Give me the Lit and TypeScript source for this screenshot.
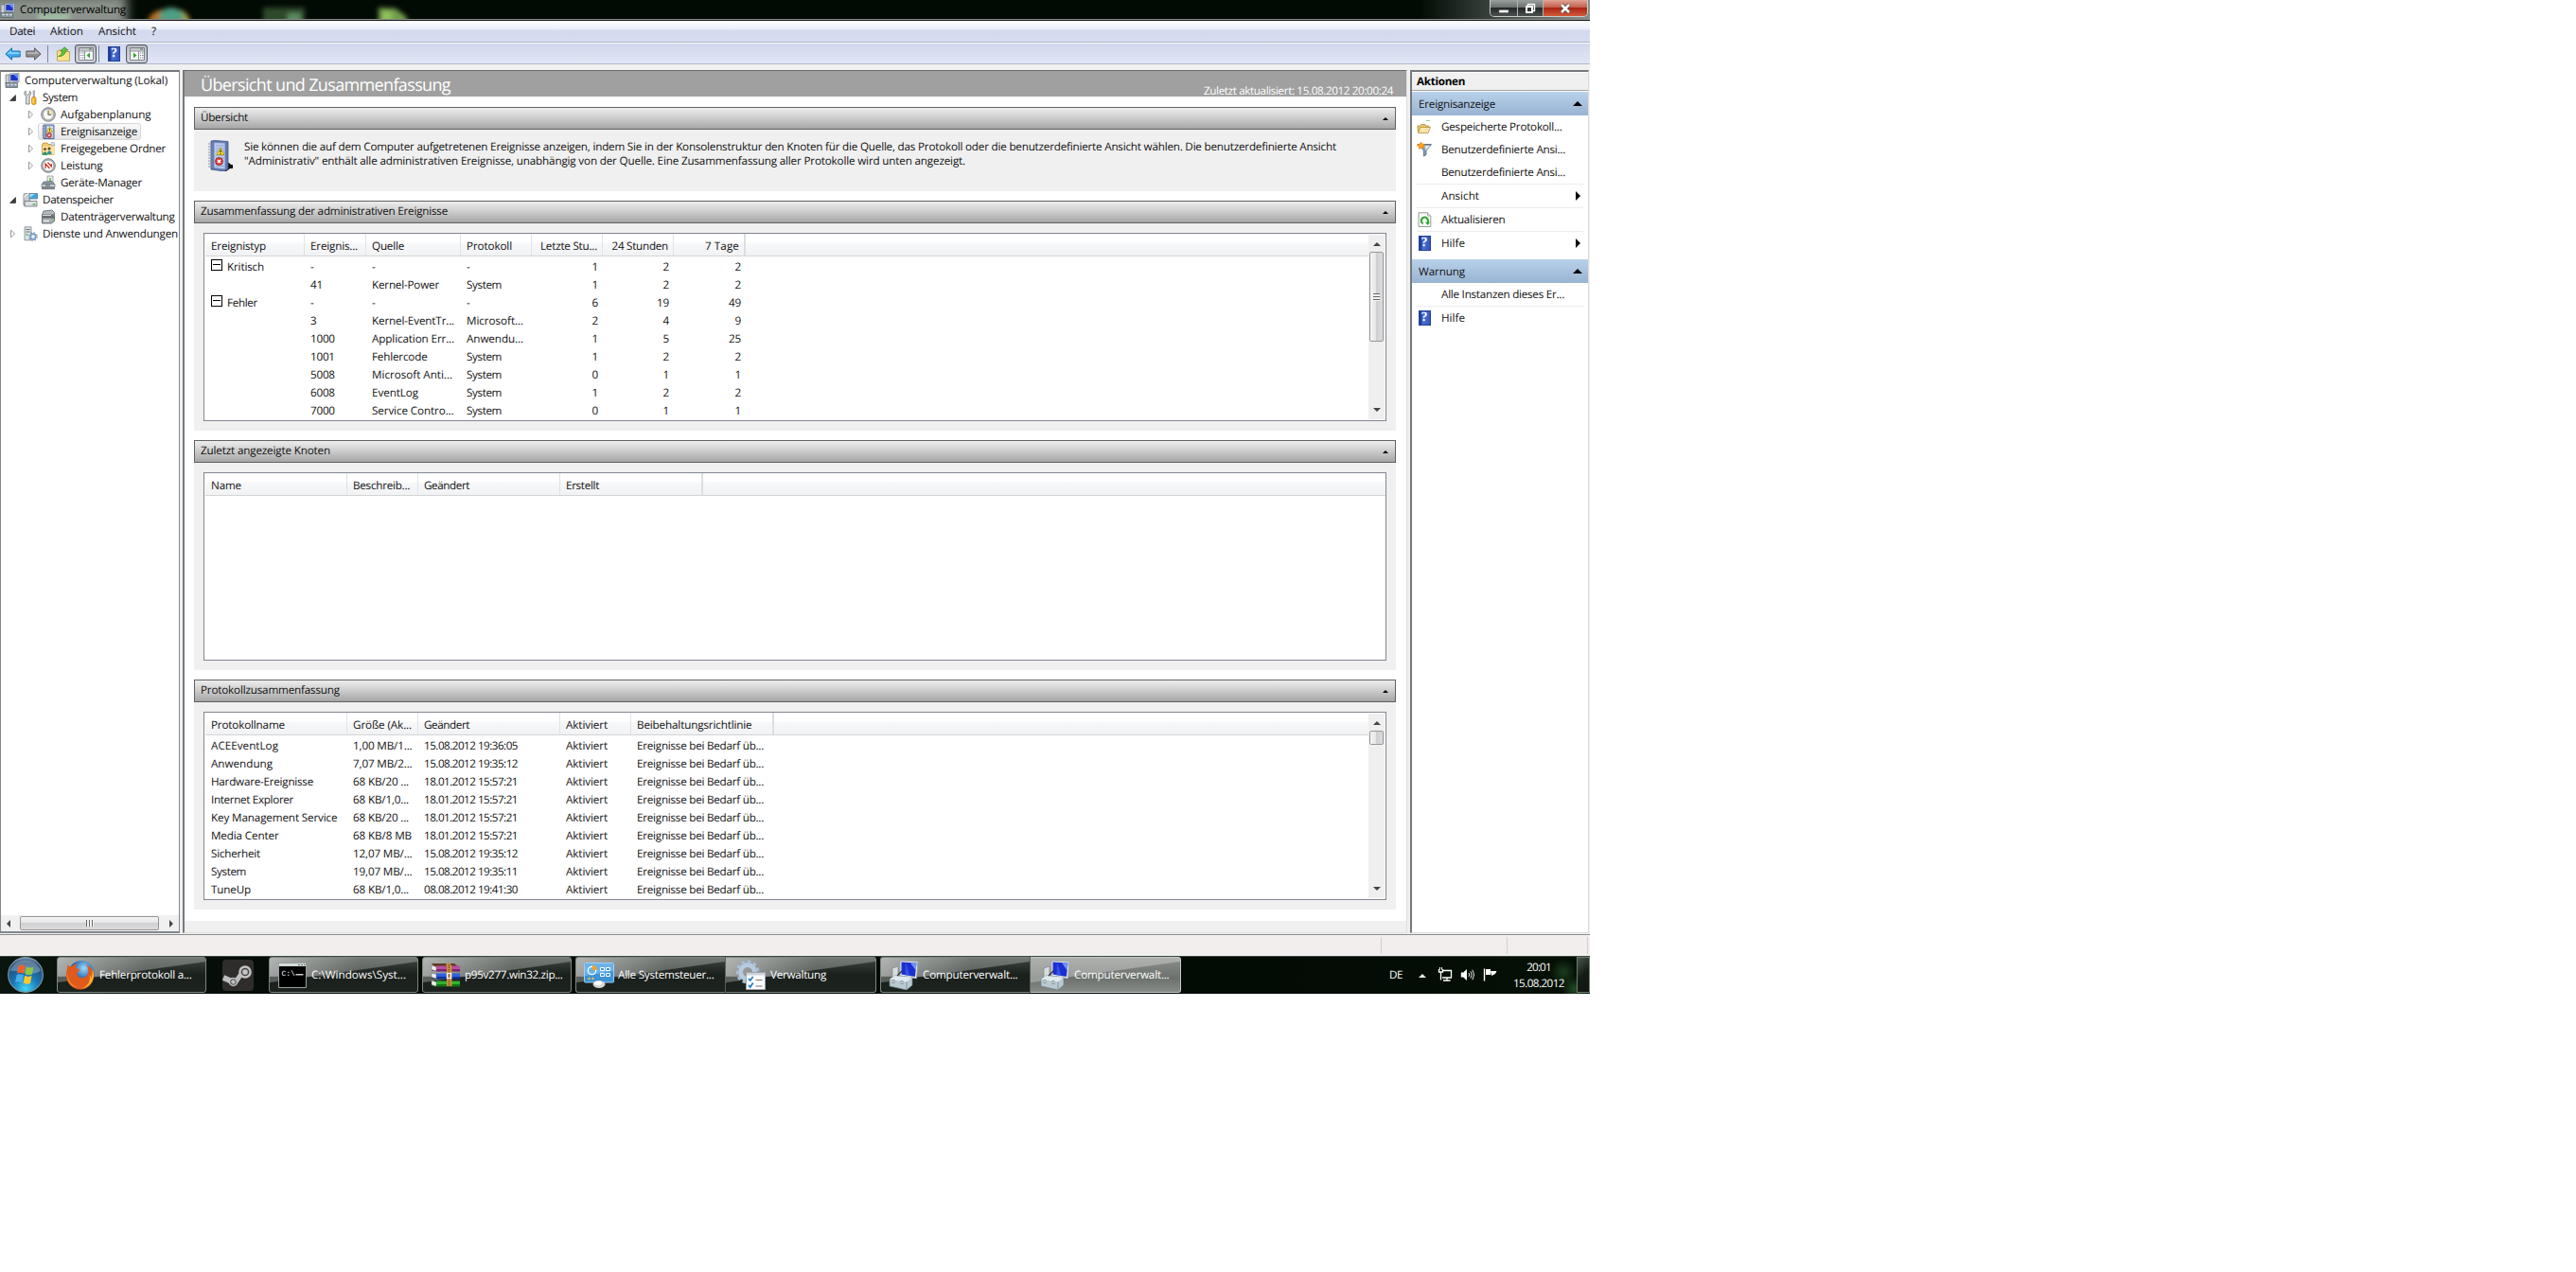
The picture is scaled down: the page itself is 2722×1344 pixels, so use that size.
import { LitElement, html, css, svg, nothing, TemplateResult } from "lit";
import { customElement, property } from "lit/decorators.js";

/* Measured advance widths of the interface strings, in pixels. */
const WIDTHS: Record<string, number> = {
  "Computerverwaltung": 112, "Datei": 27, "Aktion": 35, "Ansicht": 40,
  "Computerverwaltung (Lokal)": 151, "System": 37, "Aufgabenplanung": 95.5, "Ereignisanzeige": 81,
  "Freigegebene Ordner": 111, "Leistung": 44.5, "Geräte-Manager": 86, "Datenspeicher": 75,
  "Datenträgerverwaltung": 120.5, "Dienste und Anwendungen": 143,
  "Übersicht und Zusammenfassung": 264, "Zuletzt aktualisiert: 15.08.2012 20:00:24": 200,
  "Übersicht": 50, "Zusammenfassung der administrativen Ereignisse": 261,
  "Zuletzt angezeigte Knoten": 137, "Protokollzusammenfassung": 147,
  "Ereignistyp": 58, "Ereignis...": 50, "Quelle": 34, "Protokoll": 48, "Letzte Stu...": 60,
  "24 Stunden": 59.5, "7 Tage": 36, "Kritisch": 39, "Fehler": 32, "Kernel-Power": 71,
  "Kernel-EventTr...": 87, "Microsoft...": 60, "Application Err...": 87, "Anwendu...": 60,
  "Fehlercode": 58.5, "Microsoft Anti...": 85, "EventLog": 49, "Service Contro...": 86.5,
  "Name": 32, "Beschreib...": 60, "Geändert": 48, "Erstellt": 35,
  "Protokollname": 78, "Größe (Ak...": 62, "Aktiviert": 44, "Beibehaltungsrichtlinie": 121.5,
  "ACEEventLog": 71, "Anwendung": 65, "Hardware-Ereignisse": 108, "Internet Explorer": 87,
  "Key Management Service": 133.5, "Media Center": 71.5, "Sicherheit": 52, "TuneUp": 42,
  "1,00 MB/1...": 62.5, "7,07 MB/2...": 62.5, "68 KB/20 ...": 59, "68 KB/1,0...": 59,
  "68 KB/8 MB": 62, "12,07 MB/...": 62.5, "19,07 MB/...": 62.5, "Ereignisse bei Bedarf üb...": 134,
  "Aktionen": 51, "Gespeicherte Protokoll...": 127.5, "Benutzerdefinierte Ansi...": 131,
  "Aktualisieren": 67.5, "Hilfe": 25, "Warnung": 49, "Alle Instanzen dieses Er...": 130,
  "Fehlerprotokoll a...": 97.5, "C:\\Windows\\Syst...": 100, "p95v277.win32.zip...": 103.5,
  "Alle Systemsteuer...": 101.5, "Verwaltung": 59, "Computerverwalt...": 100.5,
  "15.08.2012": 54, "20:01": 25.5, "DE": 14,
};

const pen = document.createElement("canvas").getContext("2d")!;

/** Text with the letter spacing that gives it its known width. */
function t(text: string, size = 11.7, weight = 400, width = 0): TemplateResult {
  pen.font = `${weight} ${size}px "Open Sans"`;
  const natural = pen.measureText(text).width;
  const target =
    width || WIDTHS[text] || (/^\d\d\.\d\d\.\d{4} \d/.test(text) ? 99 : natural * 0.965);
  const gap = (target - natural) / text.length;
  return html`<span style="letter-spacing:${gap.toFixed(3)}px">${text}</span>`;
}

const pic = (w: number, h: number, body: unknown, cls = "") =>
  html`<svg class="pic ${cls}" width=${w} height=${h} viewBox="0 0 ${w} ${h}">${body}</svg>`;

const warn = svg`<path d="M9.500 3 12.500 8.300H6.500Z" fill="#ffe23a" stroke="#b08a00" stroke-width=".6"/><path d="M9.500 4.800v1.800M9.500 7.100v.6" stroke="#222" stroke-width=".9"/>
  <circle cx="9" cy="11.800" r="2.600" fill="#d8423a" stroke="#a11" stroke-width=".4"/><path d="m8 10.800 2 2m0-2-2 2" stroke="#fff" stroke-width=".9"/>`;

const icons: Record<string, TemplateResult> = {
  computer: pic(16, 16, svg`
    <path d="M1 2h4v10H1z" fill="#c9ced3" stroke="#6d7780" stroke-width=".7"/>
    <path d="m5 1 10-.6v9.400L5 9z" fill="#dfe4ea" stroke="#707a86" stroke-width=".7"/>
    <path d="m6.200 2 7.600-.4v6.800L6.200 8z" fill="#1c35c8"/><path d="M9.500 1.800 13.800 1.600V6z" fill="#6d92f2"/>
    <path d="M1 10.500h12.500v5H1z" fill="#8b979f" stroke="#56616a" stroke-width=".7"/>
    <path d="M2.500 12.500h2m2 0h2m2 0h2" stroke="#e8eef2" stroke-width="1.400"/>`),
  system: pic(16, 16, svg`
    <path d="M3.200 1v3.200l2 1.200 2-1.200V1c2 1.200 2 4.300 0 5.500V15H3.400V6.600C1.300 5.400 1.300 2.200 3.200 1Z" fill="#d5d8da" stroke="#767c80" stroke-width=".8"/>
    <path d="M11 .8h1.600v7H11z" fill="#b9bec2" stroke="#888" stroke-width=".5"/>
    <rect x="9.600" y="7.500" width="4.400" height="8" rx="1.800" fill="#f5b31e" stroke="#b9790a" stroke-width=".7"/><path d="M11 9v5" stroke="#ffe48f"/>`),
  clock: pic(16, 16, svg`
    <circle cx="8" cy="8" r="7.300" fill="#b8bcc0" stroke="#74797d" stroke-width=".9"/>
    <circle cx="8" cy="8" r="5.500" fill="#fbfaf0" stroke="#8f9498" stroke-width=".6"/>
    <path d="M8 3a5 5 0 0 1 5 5H8z" fill="#f6e3a8"/><path d="M8 3.800V8.300h3.400" fill="none" stroke="#4f5d70" stroke-width="1.100"/>`),
  events: pic(16, 16, svg`
    <path d="M3 1h11v14.500H3z" fill="#b9c9e6" stroke="#44598c" stroke-width=".9"/>
    <path d="M4.800 1.500h1.200V15H4.800z" fill="#5c74ae"/><path d="M7 3.500h6M7 6h6M7 9h6M7 12h6" stroke="#e9effa" stroke-width=".9"/>
    <path d="M1.500 2.500h3m-3 2h3m-3 2h3m-3 2h3m-3 2h3m-3 2h3m-3 2h3" stroke="#7b8594" stroke-width=".8"/>${warn}`),
  folder: pic(16, 16, svg`
    <path d="M1.500 3.500 3 2h4l1 1.500h6v11h-12.500z" fill="#eec873" stroke="#b98d33" stroke-width=".8"/>
    <path d="M2 5.500h12.500V14.500H2z" fill="#fbe3a0"/><path d="M11 1.500h3.500v3H11z" fill="#cfe0f5" stroke="#86a0c0" stroke-width=".5"/>
    <circle cx="4.500" cy="8.500" r="1.600" fill="#7b5634"/><path d="M2 15c0-5 5-5 5 0z" fill="#31976c"/>
    <circle cx="9" cy="8" r="1.600" fill="#5d4630"/><path d="M6.800 14c0-5 4.800-5 4.800 0z" fill="#3b8f98"/>`),
  perf: pic(16, 16, svg`
    <circle cx="8" cy="8" r="7.300" fill="#b3b8bb" stroke="#6f7579" stroke-width=".9"/>
    <circle cx="8" cy="8" r="5.700" fill="#fff" stroke="#8b8f92" stroke-width=".6"/>
    <path d="M5 11V6l4.500 5M7.500 4.600l3.800 4.400V6" fill="none" stroke="#c8261c" stroke-width="1.200"/>`),
  device: pic(16, 16, svg`
    <path d="M7 1h6v8H7z" fill="#eef2ef" stroke="#7f8a85" stroke-width=".7"/><path d="M9 3h2v4H9z" fill="#7cc06a"/>
    <path d="m3 7 9-.5 2.500 3H1.500z" fill="#8d9ba1" stroke="#5a666b" stroke-width=".7"/>
    <path d="M1 9.500h14v3H1z" fill="#c6ced2" stroke="#626e73" stroke-width=".7"/><path d="M1 12.500h14v2.700H1z" fill="#7a858a"/><path d="M5 11h5" stroke="#4a5458"/>`),
  storage: pic(16, 16, svg`
    <rect x="1" y="1.500" width="6.500" height="13" rx="1.500" fill="#c8cdd0" stroke="#787f84" stroke-width=".8"/>
    <path d="M2 6a4 4 0 0 1 5-4" stroke="#fff" fill="none"/>
    <path d="M7 1.500h8.500v5.500H7z" fill="#3aa7e0" stroke="#5d7688" stroke-width=".8"/><path d="M7.500 2h5l-5 4z" fill="#a9def8"/>
    <path d="M2 9.500h13v5.500H2z" fill="#dce0e2" stroke="#687075" stroke-width=".8"/><path d="M10.500 13h3" stroke="#40b040" stroke-width="1.300"/>`),
  disk: pic(16, 16, svg`
    <path d="m3 2 9-1 2.500 2.500v3H1.500z" fill="#b4babd" stroke="#5d6568" stroke-width=".8"/>
    <path d="M1 5.500h14v3.500H1z" fill="#6a7377"/><path d="M2 6.500h9" stroke="#d6dadc"/>
    <path d="M1.500 9h13v3.500l-3 2.500H1.500z" fill="#a6adb1" stroke="#50585b" stroke-width=".8"/><path d="M3 12.500h6" stroke="#eef0f1" stroke-width="1.400"/><path d="M12 10.500h1.500" stroke="#5acb4a" stroke-width="1.200"/>`),
  services: pic(16, 16, svg`
    <path d="M2 .8h7v14H2z" fill="#dde1e2" stroke="#7e868a" stroke-width=".8"/><path d="M3.300 3.500h4.400M3.300 6h4.400" stroke="#6b7478" stroke-width="1.200"/><path d="M3.500 9h2" stroke="#3fae3f" stroke-width="1.300"/>
    <circle cx="11" cy="11" r="2.800" fill="#e8f0f8" stroke="#7b9cc0" stroke-width="1.800"/><circle cx="11" cy="11" r="4.200" fill="none" stroke="#7b9cc0" stroke-width="1.300" stroke-dasharray="1.600 1.700"/>`),
  back: pic(17, 16, svg`<path d="M.8 8 7.500 1.800V5h8.700v6H7.500v3.200z" fill="#3fa9ea" stroke="#1a74b4"/><path d="M2.500 8 6.700 4v2.200H15.500V8z" fill="#8bd3fa"/>`),
  forward: pic(17, 16, svg`<path d="M16.200 8 9.500 1.800V5H.8v6h8.700v3.200z" fill="#8e8e8e" stroke="#5f5f5f"/><path d="M14.500 8 10.300 4v2.200H1.500V8z" fill="#b5b5b5"/>`),
  up: pic(16, 16, svg`<path d="M1.500 5 2.500 4h4l1 1.500H14.500v9.700H1.500z" fill="#f3d684" stroke="#b9953f" stroke-width=".8"/><path d="M2 7.500h12v7.300H2z" fill="#fbe289"/><path d="M2.500 10.500C5.500 9.500 6.500 7 6.800 5H4.800L9 .8 13 4h-2.500C10.200 8 7.500 11 2.500 10.500z" fill="#62c140" stroke="#2f8a1c" stroke-width=".7"/>`),
  paneLeft: pic(16, 14, svg`<path d="M.5.500h15v13H.5z" fill="#f8f9fa" stroke="#7d8287"/><path d="M1 1h14v2.500H1z" fill="#c1c5ca"/><path d="M11 2h3" stroke="#666"/><path d="M6.500 4v9.500M1 4h14" stroke="#8a8f94"/><path d="M2 6h1m1 0h1.500M2 8.500h1m1 0h1.500M2 11h1m1 0h1.500" stroke="#6b7a92"/><path d="M12 5.500v6L8.500 8.500z" fill="#36a52c"/>`),
  paneRight: pic(16, 14, svg`<path d="M.5.500h15v13H.5z" fill="#f8f9fa" stroke="#7d8287"/><path d="M1 1h14v2.500H1z" fill="#c1c5ca"/><path d="M11 2h3" stroke="#666"/><path d="M9.500 4v9.500M1 4h14" stroke="#8a8f94"/><path d="M11 6h1m1 0h1.500M11 8.500h1m1 0h1.500M11 11h1m1 0h1.500" stroke="#6b7a92"/><path d="M4 5.500v6L7.500 8.500z" fill="#36a52c"/>`),
  help: html`<span class="help">?</span>`,
  bigEvents: pic(28, 33, svg`
    <path d="M20 24h3l2 2h2v4h-3l-4 3h-2z" fill="#0b0b0b"/>
    <path d="m4 1 4-.5 14 1v29L18 33 4 31z" fill="#5f79b4" stroke="#3f5288" stroke-width=".8"/>
    <path d="M7 2.500 19 3v28L7 29.500z" fill="#b9c9ea" stroke="#6d82b3" stroke-width=".8"/>
    <path d="M9 6h9M9 9h9M9 12h9M9 16h9M9 19h9M9 27.500h9" stroke="#93a8d6"/>
    <path d="M1 4h5M1 7h5M1 10h5M1 13h5M1 16h5M1 19h5M1 22h5M1 25h5M1 28h5" stroke="#8791a3" stroke-width="1.200"/>
    <path d="m14 8 4 7.500h-8z" fill="#ffe02e" stroke="#b18b00" stroke-width=".8"/><path d="M14 10.500V13M14 13.700v1" stroke="#222" stroke-width="1.200"/>
    <circle cx="12.500" cy="22.500" r="4" fill="#d6403b" stroke="#9b1a1a" stroke-width=".7"/><path d="m10.900 20.900 3.200 3.200m0-3.200-3.200 3.200" stroke="#fff" stroke-width="1.400"/>`),
  open: pic(16, 16, svg`<path d="M1.500 14 .8 7h3l1-1.500H9L9.800 7h3V9" fill="#eac56c" stroke="#b58f3c" stroke-width=".8"/><path d="m1.500 14.500 2.500-6h10.500L12 14.500z" fill="#fae6aa" stroke="#b58f3c" stroke-width=".8"/><path d="M10 1.500h4" stroke="#8fd692"/>`),
  filter: pic(16, 16, svg`<path d="M1 2.500h14.500L10 9v4.500L7.500 15V9z" fill="#8aa0b5" stroke="#4c6279" stroke-width=".8"/><path d="M8.500 4H14l-4.500 5z" fill="#dbe5ee"/><path d="m4.500 0 1.500 2 2.500.2L7 4.200l.8 2.600-2.800-.8L2.500 7.500 2.400 4.800 0 3.400l2.700-.8z" fill="#ffa21c" stroke="#e07a00" stroke-width=".5"/>`),
  refresh: pic(15, 16, svg`<path d="M1 .8h9.500L13.800 4v11.500H1z" fill="#f7faf7" stroke="#8a918b" stroke-width=".9"/><path d="M10.500.8V4h3.300" fill="#dfe5df" stroke="#8a918b" stroke-width=".7"/><path d="M5.600 12.300A3.600 3.600 0 1 1 10.500 11" fill="none" stroke="#2fa32f" stroke-width="2"/><path d="M8 10.800h5L10.800 14z" fill="#2fa32f"/>`),
  firefox: pic(32, 32, svg`
    <defs><radialGradient id="ffg" cx=".6" cy=".3"><stop offset="0" stop-color="#9fdcfb"/><stop offset="1" stop-color="#0f4fa6"/></radialGradient></defs>
    <circle cx="17" cy="14.500" r="13.500" fill="url(#ffg)"/>
    <path d="M2 5c1 1.500 2.500 2.500 5 2 2-2 4-3 6-2.500-2 1-2.500 2.500-1.500 4.500l4 1.500-3 3.500c-1 4 5 7 9 4 4-3 3-9 1-13 5 3 8 8 7.500 13C29.500 26 23 31.500 16 31.500 7 31.500 1 24.500 1 16 1 12 3 9 2 5z" fill="#df5a1b"/>
    <path d="M28.500 9c4 9 0 19-11 22 7-4 9.500-9 8-15 1 1 2 2 2 4 1-4 1.500-7 1-11z" fill="#fbb52c"/>
    <path d="M2.500 14c-.5 7 4 13 10 15-7 0-12-8-10-15z" fill="#f58a2b"/>`),
  steam: pic(33, 33, svg`
    <rect width="33" height="33" rx="4" fill="#2e2d2c"/>
    <path d="M1 19 10 23" stroke="#bdbdbd" stroke-width="6"/><path d="m13 25 5.500-8 4-4" stroke="#bdbdbd" stroke-width="5" fill="none"/>
    <circle cx="11.500" cy="23.500" r="4.700" fill="#bdbdbd"/><circle cx="11.500" cy="23.500" r="2.800" fill="none" stroke="#444" stroke-width="1"/>
    <circle cx="24" cy="13" r="6.800" fill="#c4c4c4"/><circle cx="24" cy="13" r="3.600" fill="#c4c4c4" stroke="#444" stroke-width="1.500"/>`),
  cmd: pic(30, 27, svg`
    <path d="M.5.500h29v26H.5z" fill="#000" stroke="#9aa2a2"/><path d="M1 1h28v3H1z" fill="#d5dadb"/><path d="M21 2.500h2m1 0h2m1 0h1.500" stroke="#666"/>
    <text x="3.500" y="13.500" class="dos">C:\\</text><path d="M18.500 12.800h8" stroke="#fff" stroke-width="1.200"/>`),
  rar: pic(32, 26, svg`
    <path d="M1 1h24l6 5H6z" fill="#5b3b22"/>
    ${[["#b74fa0", "#7c2370", 1.5], ["#2b62e0", "#10309c", 9.5], ["#2fb32f", "#127312", 17.5]].map(([a, b, y]) => svg`
      <path d=${`M1 ${+y + 1}l5 3h25v4H6l-5-1z`} fill=${b}/><path d=${`M6 ${+y + 2}h25v3.500H6z`} fill=${a}/>
      <path d=${`M1 ${+y + 1.5}l5 1.500v4.500l-5-1.500z`} fill="#eee" stroke="#777" stroke-width=".5"/>`)}
    <path d="M16 1h5l1.500 3v21h-5.500V4z" fill="#c98b3a"/><path d="M19.500 2v23" stroke="#6b431a" stroke-dasharray="1.500 1"/>
    <path d="M17.500 11.500h4v5h-4z" fill="none" stroke="#f2f2f2" stroke-width="1.400"/>`),
  control: pic(32, 27, svg`
    <rect x=".5" y=".5" width="31" height="20.500" rx="1" fill="#3c93d6" stroke="#9fd0f2"/>
    <path d="M1 1h30v8L1 14z" fill="#69b3e8"/>
    <circle cx="8.500" cy="8.500" r="4.200" fill="none" stroke="#fff" stroke-width="1.300"/><path d="M9 8V2.800a5 5 0 0 1 5 5z" fill="#f9a01e"/>
    <path d="M17.500 5.500h4v3h-4zm6 0h4v3h-4zm-6 6h4v3h-4zm6 0h4v3h-4z" fill="#3c93d6" stroke="#fff"/>
    <circle cx="5.500" cy="17" r="1.200" fill="#ffbf3a"/><circle cx="9.500" cy="17" r="1.200" fill="#ffbf3a"/>
    <ellipse cx="16" cy="23" rx="6.500" ry="4" fill="#d5d5d5"/><ellipse cx="15" cy="21.800" rx="4" ry="2" fill="#fff"/>`),
  admin: pic(32, 32, svg`
    <circle cx="12" cy="13" r="7.500" fill="none" stroke="#b7cbe0" stroke-width="5"/><circle cx="12" cy="13" r="10.800" fill="none" stroke="#a9c0d8" stroke-width="3.400" stroke-dasharray="3.400 2.900"/>
    <path d="M10.500 13.500h20v18h-20z" fill="#fbfbfb" stroke="#9aa4ab"/><path d="M11 14h19.500v2.500H11z" fill="#cdd3d8"/>
    <path d="m13 20 1.700 2 3-4M13 27l1.700 2 3-4.500" fill="none" stroke="#1f7bc4" stroke-width="1.700"/><path d="M20.500 21.500h7M20.500 28h7" stroke="#777"/>`),
  mmc: pic(32, 32, svg`
    <path d="m4 9 6-2v16H4z" fill="#d8dde0" stroke="#7f888d" stroke-width=".7"/>
    <path d="m12 1 19 1-1.500 18-17.500-3z" fill="#e7ebee" stroke="#8d969b" stroke-width=".7"/><path d="m13.500 2.500 16 1-1.600 14.500-14.400-2.500z" fill="#1a2fd0"/><path d="m23 3.200 6.500.3-.8 8z" fill="#6f93f4"/><path d="m18 2.800 4.500 14.200-5-.8z" fill="#4361e4" opacity=".7"/>
    <path d="m1 21 5-4 19 1.500V27l-6 5L1 28z" fill="#b9c9d2" stroke="#6a7d88" stroke-width=".7"/><path d="m1 21 18 2.500 6-5L6 17z" fill="#dfe9ee"/><path d="M19 23.500V31.500" stroke="#6a7d88" stroke-width=".7"/>
    <path d="M5 21v4M14 22v4" stroke="#56656e" stroke-width="2.400"/><path d="M5 21.500v3M14 22.500v3" stroke="#eef3f5" stroke-width="1.400"/><path d="m9 17 5-5" stroke="#333" stroke-width="1.300"/>`),
  network: pic(16, 16, svg`<path d="M6 3.500h8.500v7.500H5M1.500 2v3h4V2M3.500 5V13.500M10 11v2.500M6 14h7.500" fill="none" stroke="#fff" stroke-width="1.300"/><path d="M2.500 0v2.500M4.500 0v2.500" stroke="#fff"/>`),
  volume: pic(16, 16, svg`<path d="M.8 5.500h2.500L7 2v12l-3.700-3.500H.8z" fill="#fff"/><path d="M9 6q1.300 2 0 4M11 4.300q2.300 3.700 0 7.400M13 2.800q3 5.200 0 10.400" fill="none" stroke="#e6e6e6"/>`),
  flag: pic(16, 16, svg`<path d="M1.500 1.500v13" stroke="#fff" stroke-width="1.400"/><path d="M3 2h5v6H3z" fill="#fff"/><path d="M8 4h6.500L13 7l-4 2z" fill="#fff"/>`),
  orb: pic(38, 38, svg`
    <defs><radialGradient id="orb" cx=".5" cy=".9" r=".95"><stop offset="0" stop-color="#3fd6f8"/><stop offset=".4" stop-color="#1a78b8"/><stop offset=".8" stop-color="#234a74"/><stop offset="1" stop-color="#9fb7c9"/></radialGradient></defs>
    <circle cx="19" cy="19" r="18.300" fill="url(#orb)" stroke="#7b93a4" stroke-width="1.200"/>
    <path d="M3 15a16.500 15 0 0 1 32 0Q26 20 19 17T3 15z" fill="#fff" opacity=".28"/>
    <path d="M11.500 9.500q4-2 7.200.2l-1.500 8q-3.500-2-7.200-.2z" fill="#f0622d"/><path d="M20 10.500q3.500 2 7.500.3l-1.700 7.700q-3.500 1.600-7.300-.3z" fill="#8fc741"/>
    <path d="M9.700 19q3.500-1.800 7.200.2l-1.600 8q-3.300-2-7.200-.2z" fill="#45aee8"/><path d="M18.200 19.800q3.500 2 7.400.3l-1.700 7.900q-3.500 1.500-7.300-.4z" fill="#fdc72e"/>`),
};

const text = css`
  :host { font: 11.7px/16px "Open Sans", "Noto Sans", sans-serif; color: #111; text-rendering: geometricPrecision; }
  span { white-space: pre; }
  .pic { display: block; flex: none; }
  .help {
    display: block; flex: none; width: 13px; height: 16px; box-sizing: border-box; text-align: center;
    background: linear-gradient(90deg, #223f9c 0 2px, #4a70d6 3px, #3558c0); border: 1px solid #27418f;
    color: #fff; font: bold 14px/14px "Liberation Serif", serif;
  }
`;

interface Column { label: string; width: number; right?: boolean }

@customElement("scroll-bar")
class ScrollBar extends LitElement {
  @property({ type: Number }) thumb = 16;
  static styles = css`
    :host { display: flex; flex-direction: column; width: 17px; background: #efefef; align-items: center; }
    i { display: block; width: 0; height: 0; border: 4px solid transparent; }
    .up { border-top: 0; border-bottom-color: #444; margin: 8px 0 6px; }
    .down { border-bottom: 0; border-top-color: #444; margin: auto 0 8px; }
    .thumb { width: 13px; border: 1px solid #979797; border-radius: 2px; display: grid; place-items: center;
      background: linear-gradient(90deg, #f5f5f5, #e6e6e7 45%, #cfd0d2 50%, #dcdcdd); }
    .grip { width: 7px; height: 8px; background: repeating-linear-gradient(#666 0 1px, #f4f4f4 1px 3px); }
  `;
  render() {
    return html`<i class="up"></i>
      <div class="thumb" style="height:${this.thumb - 2}px">${this.thumb > 30 ? html`<div class="grip"></div>` : nothing}</div>
      <i class="down"></i>`;
  }
}

@customElement("list-view")
class ListView extends LitElement {
  @property({ attribute: false }) columns: Column[] = [];
  @property({ attribute: false }) rows: string[][] = [];
  @property({ type: Number }) thumb = 0;
  static styles = [text, css`
    :host { display: flex; height: 197px; border: 1px solid #828790; background: #fff; overflow: hidden; }
    .main { flex: 1; min-width: 0; padding-left: 1px; }
    .row { display: grid; height: 19px; align-items: center; }
    .head { height: 23px; align-items: stretch; border-bottom: 1px solid #d5d5d5; margin-bottom: 1px;
      background: linear-gradient(#fff 0 9px, #f7f8fa 10px, #f1f2f4); }
    .cell { padding: 0 5px 0 6px; overflow: hidden; display: flex; align-items: center; }
    .head .cell { border-right: 1px solid #e1e3e6; padding-top: 2px; box-sizing: border-box; }
    .head .cell:last-child { border-right: 2px solid #dcdee2; }
    .right { justify-content: flex-end; }
    .toggle { width: 10px; height: 10px; border: 1px solid #000; margin: -4px 5px 0 0; display: grid; place-items: center; flex: none; }
    .toggle::after { content: ""; width: 8px; height: 1px; background: #000; }
    scroll-bar { flex: none; margin: 1px 1px 1px 0; }
  `];
  render() {
    const grid = `grid-template-columns:${this.columns.map((c) => c.width + "px").join(" ")}`;
    return html`
      <div class="main">
        <div class="row head" style=${grid}>
          ${this.columns.map((c) => html`<div class="cell ${c.right ? "right" : ""}">${t(c.label)}</div>`)}
        </div>
        ${this.rows.map((r) => html`<div class="row" style=${grid}>
          ${r.map((v, i) => html`<div class="cell ${this.columns[i].right ? "right" : ""}">
            ${i === 0 && (v === "Kritisch" || v === "Fehler") ? html`<div class="toggle"></div>` : nothing}${v ? t(v) : nothing}</div>`)}
        </div>`)}
      </div>
      ${this.thumb ? html`<scroll-bar .thumb=${this.thumb}></scroll-bar>` : nothing}`;
  }
}

@customElement("group-box")
class GroupBox extends LitElement {
  @property() label = "";
  static styles = [text, css`
    :host { display: block; background: #f0f0f0; }
    .bar { height: 22px; border: 1px solid #626262; display: flex; align-items: center; justify-content: space-between;
      padding: 0 7px 0 6px; background: linear-gradient(#ededed, #cfcfcf 45%, #a5a5a5); }
    .bar span { margin-top: -2px; }
    i { border: 3px solid transparent; border-top: 0; border-bottom-color: #000; margin-top: 1px; }
  `];
  render() {
    return html`<div class="bar">${t(this.label)}<i></i></div><slot></slot>`;
  }
}

const tree: { icon: string; label: string; level: number; arrow?: string; on?: boolean }[] = [
  { icon: "computer", label: "Computerverwaltung (Lokal)", level: 0 },
  { icon: "system", label: "System", level: 1, arrow: "open" },
  { icon: "clock", label: "Aufgabenplanung", level: 2, arrow: "shut" },
  { icon: "events", label: "Ereignisanzeige", level: 2, arrow: "shut", on: true },
  { icon: "folder", label: "Freigegebene Ordner", level: 2, arrow: "shut" },
  { icon: "perf", label: "Leistung", level: 2, arrow: "shut" },
  { icon: "device", label: "Geräte-Manager", level: 2 },
  { icon: "storage", label: "Datenspeicher", level: 1, arrow: "open" },
  { icon: "disk", label: "Datenträgerverwaltung", level: 2 },
  { icon: "services", label: "Dienste und Anwendungen", level: 1, arrow: "shut" },
];

const eventColumns: Column[] = [
  { label: "Ereignistyp", width: 105 }, { label: "Ereignis...", width: 65 }, { label: "Quelle", width: 100 },
  { label: "Protokoll", width: 75 }, { label: "Letzte Stu...", width: 75, right: true },
  { label: "24 Stunden", width: 75, right: true }, { label: "7 Tage", width: 76, right: true },
];
const eventRows = [
  ["Kritisch", "-", "-", "-", "1", "2", "2"],
  ["", "41", "Kernel-Power", "System", "1", "2", "2"],
  ["Fehler", "-", "-", "-", "6", "19", "49"],
  ["", "3", "Kernel-EventTr...", "Microsoft...", "2", "4", "9"],
  ["", "1000", "Application Err...", "Anwendu...", "1", "5", "25"],
  ["", "1001", "Fehlercode", "System", "1", "2", "2"],
  ["", "5008", "Microsoft Anti...", "System", "0", "1", "1"],
  ["", "6008", "EventLog", "System", "1", "2", "2"],
  ["", "7000", "Service Contro...", "System", "0", "1", "1"],
];
const nodeColumns: Column[] = [
  { label: "Name", width: 150 }, { label: "Beschreib...", width: 75 }, { label: "Geändert", width: 150 }, { label: "Erstellt", width: 151 },
];
const logColumns: Column[] = [
  { label: "Protokollname", width: 150 }, { label: "Größe (Ak...", width: 75 }, { label: "Geändert", width: 150 },
  { label: "Aktiviert", width: 75 }, { label: "Beibehaltungsrichtlinie", width: 151 },
];
const logRows = [
  ["ACEEventLog", "1,00 MB/1...", "15.08.2012 19:36:05"],
  ["Anwendung", "7,07 MB/2...", "15.08.2012 19:35:12"],
  ["Hardware-Ereignisse", "68 KB/20 ...", "18.01.2012 15:57:21"],
  ["Internet Explorer", "68 KB/1,0...", "18.01.2012 15:57:21"],
  ["Key Management Service", "68 KB/20 ...", "18.01.2012 15:57:21"],
  ["Media Center", "68 KB/8 MB", "18.01.2012 15:57:21"],
  ["Sicherheit", "12,07 MB/...", "15.08.2012 19:35:12"],
  ["System", "19,07 MB/...", "15.08.2012 19:35:11"],
  ["TuneUp", "68 KB/1,0...", "08.08.2012 19:41:30"],
].map((r) => [...r, "Aktiviert", "Ereignisse bei Bedarf üb..."]);

const intro1 = "Sie können die auf dem Computer aufgetretenen Ereignisse anzeigen, indem Sie in der Konsolenstruktur den Knoten für die Quelle, das Protokoll oder die benutzerdefinierte Ansicht wählen. Die benutzerdefinierte Ansicht";
const intro2 = "\"Administrativ\" enthält alle administrativen Ereignisse, unabhängig von der Quelle. Eine Zusammenfassung aller Protokolle wird unten angezeigt.";

@customElement("app-root")
class AppRoot extends LitElement {
  static styles = [text, css`
    :host { display: block; background: #fff; }
    .desk { width: 1680px; height: 1050px; display: flex; flex-direction: column; overflow: hidden; background: #f0f0f0; }
    .row { display: flex; align-items: center; }

    .title { height: 20px; border-bottom: 1px solid #8d8f8d; flex: none; align-items: flex-start;
      display: flex; justify-content: space-between; position: relative;
      background: linear-gradient(90deg, transparent 1500px, rgba(190,200,195,.7) 1680px), #020a04; }
    .glass { position: absolute; inset: 0 auto auto 0; width: 460px; height: 20px; }
    .caption { display: flex; gap: 5px; padding: 3px 0 0; height: 17px; position: relative; overflow: hidden; }
    .caption span { margin-top: -1px; color: #000; }
    .buttons { display: flex; height: 18px; width: 104px; margin-right: 2px; border: 1px solid #c8cccc; border-top: 0; border-radius: 0 0 5px 5px; box-sizing: border-box; overflow: hidden; position: relative; }
    .btn { flex: none; width: 29px; box-sizing: border-box; border-right: 1px solid #aeb4b4; display: grid; place-items: center; background: linear-gradient(#9aa09e, #6a706e 45%, #23292a 50%, #4b5250); }
    .btn + .btn { width: 27px; }
    .btn + .btn + .btn { width: 46px; border: 0; background: linear-gradient(#e0a395, #c4604c 45%, #a82412 50%, #d15c3c); }
    .edge { height: 1px; background: #16181a; flex: none; }

    .menu { height: 22px; flex: none; border-bottom: 1px solid #aeb3c3; background: linear-gradient(#fff, #e8edf8 9px, #d4daee 10px, #d7ddf0); padding-left: 10px; }
    .menu span { display: block; }
    .menu .m { width: 43px; }
    .menu .m + .m { width: 51px; }
    .menu .m + .m + .m { width: 56px; }
    .tools { height: 21px; flex: none; border-top: 1px solid #fbfcff; border-bottom: 1px solid #b3b9c9; background: linear-gradient(#d2d8ec, #e0e6f6); padding-left: 5px; gap: 5px; }
    .tools .bar { width: 1px; height: 18px; background: #7e8594; margin-left: 1px; }
    .tools .bar.near { margin: 0 4px 0 -3px; }
    .tools .on { display: grid; place-items: center; width: 21px; height: 18px; border: 1px solid #545b66; border-radius: 3px; background: linear-gradient(#bcbfc6, #d6d9e0); box-shadow: inset 0 0 1px #545b66; }
    .tools .folder { margin-left: 3px; }
    .tools .folder + .on { margin-left: -1px; }
    .tools .help + .on { margin-left: 1px; }

    .body { flex: none; height: 912px; margin-top: 6px; display: flex; align-items: stretch; }
    .tree { margin-right: 3px; border: 1px solid #828790; border-top: 2px solid #75797d; border-bottom-width: 2px; background: #fff; display: flex; flex-direction: column; box-sizing: border-box; width: 190px; overflow: hidden; }
    .node { height: 18px; display: flex; align-items: center; padding-left: 7px; flex: none; }
    .node.l0 { padding-left: 0; }
    .node.l2 { padding-left: 26px; }
    .arrow { width: 11px; height: 10px; flex: none; margin-right: 2px; }
    .l0 .arrow { display: none; }
    .l0 .item { padding-left: 3px; }
    .item { display: flex; align-items: center; gap: 5px; height: 18px; padding: 0 3px 0 2px; box-sizing: border-box; border: 1px solid transparent; }
    .l0 .item { gap: 5px; }
    .item.on { border-color: #d6d6d6; border-radius: 3px; background: linear-gradient(#f9f9f9, #e7e7e7); }
    .hscroll { margin-top: auto; height: 17px; background: #f0f0f0; display: flex; align-items: center; justify-content: space-between; padding: 0 6px; }
    .hscroll i { border: 4px solid transparent; }
    .hscroll .l { border-left: 0; border-right-color: #444; }
    .hscroll .r { border-right: 0; border-left-color: #444; }
    .hthumb { width: 145px; height: 13px; border: 1px solid #979797; border-radius: 2px; margin-right: 1px; display: grid; place-items: center; background: linear-gradient(#f5f5f5, #e6e6e7 45%, #cfd0d2 50%, #dcdcdd); }
    .hgrip { width: 8px; height: 7px; background: repeating-linear-gradient(90deg, #666 0 1px, #f4f4f4 1px 3px); }

    .center { width: 1294px; box-sizing: border-box; border-left: 2px solid #75797d; border-top: 1px solid #696969; border-right: 1px solid #dfdfdf; border-bottom: 1px solid #dfdfdf; background: #fff; display: flex; flex-direction: column; margin-right: 3px; }
    .banner { height: 27px; flex: none; background: #a0a0a0; color: #fff; display: flex; justify-content: space-between; padding: 0 14px 0 17px; }
    .big { font-size: 18px; line-height: 30px; }
    .stamp { padding-top: 13px; }
    .groups { padding: 11px 11px 12px 10px; display: flex; flex-direction: column; gap: 10px; }
    .intro { height: 65px; display: flex; gap: 11px; padding: 11px 0 0 14px; box-sizing: border-box; line-height: 15px; }
    .intro .lines { display: flex; flex-direction: column; }
    list-view { margin: 10px 10px 0; }
    .pad { height: 10px; }
    .foot { flex: 1; background: #f0f0f0; }

    .actions { width: 189px; box-sizing: border-box; border: 1px solid #dcdcdc; border-left: 2px solid #75797d; border-top: 2px solid #75797d; background: #fff; }
    .ahead { height: 18px; background: #f0f0f0; border-bottom: 1px solid #a0a0a0; border-top: 1px solid #fff; margin-bottom: 1px; padding-left: 5px; font-weight: 700; color: #000; line-height: 19px; }
    .band { height: 25px; display: flex; align-items: center; justify-content: space-between; padding: 0 6px 0 7px; background: linear-gradient(#b9d1ea, #98b4d2); }
    .band i { border: 5px solid transparent; border-top: 0; border-bottom-color: #000; }
    .act { height: 24px; display: flex; align-items: center; padding-left: 5px; gap: 10px; }
    .act .slot { width: 16px; display: flex; justify-content: center; }
    .act i { margin-left: auto; margin-right: 8px; border: 5px solid transparent; border-right: 0; border-left-color: #000; }
    .rule { height: 1px; background: #ececec; margin: 0 5px; }
    .gap { height: 5px; }

    .status { height: 21px; flex: none; margin: 1px 0 1px; border-top: 1px solid #8d8d8d; box-sizing: border-box; background: #f1eeed; display: flex; justify-content: flex-end; padding: 2px 2px 0 0; }
    .seg { width: 132px; border-left: 1px solid #d2cfce; }
    .seg + .seg { width: 84px; border-right: 1px solid #d2cfce; }

    .task { height: 40px; flex: none; margin-top: 1px; box-sizing: border-box; border-top: 1px solid #3b463c; padding-bottom: 1px; display: flex; background: radial-gradient(circle 14px at 1652px 16px, #1b3c20, transparent), radial-gradient(circle 14px at 1664px 34px, #234a28, transparent), linear-gradient(90deg, #0a150e, #030b05 20%, #030b05 80%, #051005); color: #fff; align-items: stretch; }
    .start { width: 60px; display: grid; place-items: center; padding-right: 7px; box-sizing: border-box; }
    .tb { width: 158px; box-sizing: border-box; border: 1px solid #7e8681; border-radius: 3px; display: flex; align-items: center; padding-left: 8px; gap: 4px; margin-right: 4px;
      background: linear-gradient(172deg, rgba(255,255,255,.28) 0 44%, transparent 46%), linear-gradient(100deg, rgba(255,255,255,.45), transparent 60%) 0 0/100% 55% no-repeat, linear-gradient(#3d4640, #1a201c 50%, #1c221d); }
    .tb .pic { width: 32px; }
    .tb.join { margin-right: 0; border-top-right-radius: 0; border-bottom-right-radius: 0; border-right: 1px solid #5a625d; width: 159px; }
    .tb.next { border-left: 0; border-top-left-radius: 0; border-bottom-left-radius: 0; padding-left: 11px; width: 159px; }
    .tb.lit { padding-left: 10px; background: linear-gradient(172deg, rgba(255,255,255,.3) 0 44%, transparent 46%), linear-gradient(#8b8f8c, #6c716d 60%, #868b87); border-color: #c6cac7; }
    .steam { width: 62px; padding-left: 13px; box-sizing: border-box; display: flex; align-items: center; margin-top: 1px; }
    .tray { margin-left: auto; display: flex; align-items: center; }
    .tray .up { border: 4px solid transparent; border-top: 0; border-bottom-color: #e8e8e8; margin: 1px 12px 0 17px; }
    .tray .pic { margin-right: 8px; }
    .clock { width: 66px; margin-left: 2px; margin-right: 7px; padding-top: 2px; line-height: 17px; display: flex; flex-direction: column; align-items: center; }
    .show { width: 12px; height: 36px; border: 1px solid #6f7c72; background: linear-gradient(135deg, #4a564c, #141c16 50%, #0e1510); box-sizing: content-box; }
    .dos { font: 8px "Liberation Mono", monospace; fill: #fff; }
  `];

  private node(n: (typeof tree)[number]) {
    const arrow = n.arrow === "open" ? svg`<path d="M8.500 2.500v6h-6z" fill="#3a3a3a" stroke="#222" stroke-width=".6"/>`
      : n.arrow === "shut" ? svg`<path d="M3.500 1v8L7.500 5z" fill="#fff" stroke="#9a9a9a"/>` : nothing;
    return html`<div class="node l${n.level}">
      <svg class="arrow" viewBox="0 0 11 10">${arrow}</svg>
      <div class="item ${n.on ? "on" : ""}">${icons[n.icon]}${t(n.label)}</div></div>`;
  }
  private act(label: string, icon = "", more = false) {
    return html`<div class="act"><div class="slot">${icon ? icons[icon] : nothing}</div>${t(label)}${more ? html`<i></i>` : nothing}</div>`;
  }
  private task(icon: string, label: string, cls = "") {
    return html`<div class="tb ${cls}">${icons[icon]}${t(label)}</div>`;
  }

  render() {
    const rule = html`<div class="rule"></div>`;
    return html`<div class="desk">
      <div class="title">
        <svg class="glass" viewBox="0 0 460 20">
          <defs><filter id="soft" x="-20%" y="-50%" width="140%" height="200%"><feGaussianBlur stdDeviation="2.500"/></filter>
            <filter id="halo" x="-20%" y="-80%" width="140%" height="260%"><feGaussianBlur stdDeviation="6"/></filter></defs>
          <rect x="-20" y="-6" width="154" height="38" fill="#8b938c" filter="url(#halo)"/>
          <g filter="url(#soft)">
            <path d="M40 14h34v12H40z" fill="#a9cfae" opacity=".7"/>
            <path d="M156 24q2-12 16-14v14z" fill="#b8701c"/><path d="M190 10q10 4 12 16h-14z" fill="#a8a238"/>
            <ellipse cx="181" cy="18" rx="13" ry="10" fill="#4f9f82"/>
            <path d="M278 8h44v18h-44z" fill="#2e482c"/><path d="M304 14h14v12h-14z" fill="#5c8a5e"/>
            <path d="M400 8l18 1 12 9v8h-30z" fill="#6f9f48"/><path d="M404 12h10v12h-10z" fill="#92c05c"/>
          </g>
        </svg>
        <div class="caption">${icons.computer}${t("Computerverwaltung")}</div>
        <div class="buttons">
          <div class="btn">${pic(12, 12, svg`<path d="M1 7.500h10v3H1z" fill="#fff" stroke="#555" stroke-width=".5"/>`)}</div>
          <div class="btn">${pic(12, 12, svg`<path d="M3.500 3V1.500h7v7H9" fill="none" stroke="#fff" stroke-width="1.400"/><path d="M2 4h6v6H2z" fill="#333" stroke="#fff" stroke-width="2"/>`)}</div>
          <div class="btn">${pic(12, 12, svg`<path d="m2 2 8 8m0-8-8 8" stroke="#444" stroke-width="4"/><path d="m2 2 8 8m0-8-8 8" stroke="#fff" stroke-width="2.600"/>`)}</div>
        </div>
      </div>
      <div class="edge"></div>
      <div class="menu row">
        <div class="m">${t("Datei")}</div><div class="m">${t("Aktion")}</div><div class="m">${t("Ansicht")}</div><div>${t("?")}</div>
      </div>
      <div class="tools row">
        ${icons.back}${icons.forward}<div class="bar"></div>
        <div class="folder">${icons.up}</div><div class="on">${icons.paneLeft}</div><div class="bar near"></div>
        ${icons.help}<div class="on">${icons.paneRight}</div>
      </div>
      <div class="body">
        <div class="tree">
          ${tree.map((n) => this.node(n))}
          <div class="hscroll"><i class="l"></i><div class="hthumb"><div class="hgrip"></div></div><i class="r"></i></div>
        </div>
        <div class="center">
          <div class="banner">
            <div class="big">${t("Übersicht und Zusammenfassung", 18)}</div>
            <div class="stamp">${t("Zuletzt aktualisiert: 15.08.2012 20:00:24")}</div>
          </div>
          <div class="groups">
            <group-box label="Übersicht">
              <div class="intro">${icons.bigEvents}<div class="lines">${t(intro1, 11.7, 400, 1154)}${t(intro2, 11.7, 400, 762)}</div></div>
            </group-box>
            <group-box label="Zusammenfassung der administrativen Ereignisse">
              <list-view .columns=${eventColumns} .rows=${eventRows} .thumb=${95}></list-view><div class="pad"></div>
            </group-box>
            <group-box label="Zuletzt angezeigte Knoten">
              <list-view .columns=${nodeColumns}></list-view><div class="pad"></div>
            </group-box>
            <group-box label="Protokollzusammenfassung">
              <list-view .columns=${logColumns} .rows=${logRows} .thumb=${15}></list-view><div class="pad"></div>
            </group-box>
          </div>
          <div class="foot"></div>
        </div>
        <div class="actions">
          <div class="ahead">${t("Aktionen", 11.7, 700)}</div>
          <div class="band">${t("Ereignisanzeige")}<i></i></div>
          ${this.act("Gespeicherte Protokoll...", "open")}
          ${this.act("Benutzerdefinierte Ansi...", "filter")}
          ${this.act("Benutzerdefinierte Ansi...")}${rule}
          ${this.act("Ansicht", "", true)}${rule}
          ${this.act("Aktualisieren", "refresh")}${rule}
          ${this.act("Hilfe", "help", true)}
          <div class="gap"></div>
          <div class="band">${t("Warnung")}<i></i></div>
          ${this.act("Alle Instanzen dieses Er...")}${rule}
          ${this.act("Hilfe", "help")}
        </div>
      </div>
      <div class="status"><div class="seg"></div><div class="seg"></div></div>
      <div class="task">
        <div class="start">${icons.orb}</div>
        ${this.task("firefox", "Fehlerprotokoll a...")}
        <div class="steam">${icons.steam}</div>
        ${this.task("cmd", "C:\\Windows\\Syst...")}
        ${this.task("rar", "p95v277.win32.zip...")}
        ${this.task("control", "Alle Systemsteuer...", "join")}
        ${this.task("admin", "Verwaltung", "next")}
        ${this.task("mmc", "Computerverwalt...", "join")}
        ${this.task("mmc", "Computerverwalt...", "next lit")}
        <div class="tray">
          ${t("DE")}<i class="up"></i>${icons.network}${icons.volume}${icons.flag}
          <div class="clock">${t("20:01")}${t("15.08.2012")}</div>
          <div class="show"></div>
        </div>
      </div>
    </div>`;
  }
}
